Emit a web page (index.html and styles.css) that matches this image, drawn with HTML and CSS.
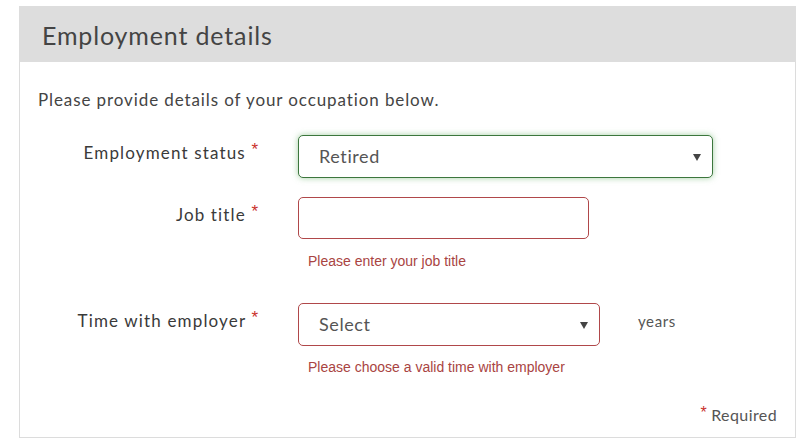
FILE: index.html
```html
<!DOCTYPE html>
<html>
<head>
<meta charset="utf-8">
<link rel="stylesheet" href="styles.css">
</head>
<body>
<div class="panel">
  <div class="panel-head">Employment details</div>
  <div class="panel-body">
    <p class="intro">Please provide details of your occupation below.</p>

    <div class="row row-status">
      <label class="label">Employment status <span class="req">*</span></label>
      <div class="field">
        <div class="select select-ok select-wide">
          <span class="value">Retired</span>
          <span class="arrow"></span>
        </div>
      </div>
    </div>

    <div class="row row-job">
      <label class="label">Job title <span class="req">*</span></label>
      <div class="field">
        <div class="input input-err"></div>
        <div class="error">Please enter your job title</div>
      </div>
    </div>

    <div class="row row-time">
      <label class="label">Time with employer <span class="req">*</span></label>
      <div class="field">
        <div class="field-line">
          <div class="select select-err select-mid">
            <span class="value">Select</span>
            <span class="arrow"></span>
          </div>
          <span class="unit">years</span>
        </div>
        <div class="error error-2">Please choose a valid time with employer</div>
      </div>
    </div>

    <div class="required"><span class="req">*</span> Required</div>
  </div>
</div>
</body>
</html>
```

FILE: styles.css
```css
html, body {
  margin: 0;
  padding: 0;
  background: #ffffff;
}
body {
  padding: 6px 13px 0 19px;
  font-family: "Lato", "Open Sans", sans-serif;
  color: #444;
}
.panel {
  border: 1px solid #dcdcdc;
  border-top: none;
  width: 777px;
  height: 432px;
  box-sizing: border-box;
}
.panel-head {
  background: #dddddd;
  height: 56px;
  margin: 0 -1px;
  padding-left: 23px;
  font-size: 25px;
  line-height: 58px;
  color: #444;
  letter-spacing: 0.85px;
}
.panel-body {
  padding: 26px 18px 0 18px;
}
.intro {
  margin: 0;
  font-size: 17px;
  line-height: 24px;
  color: #444;
  letter-spacing: 0.9px;
}
.row {
  display: flex;
  align-items: flex-start;
}
.row-status { margin-top: 23px; }
.row-job { margin-top: 19px; }
.row-time { margin-top: 33px; }
.label {
  width: 220px;
  flex: none;
  text-align: right;
  font-size: 17px;
  line-height: 24px;
  padding-top: 6px;
  color: #3a3a3a;
  margin-right: 40px;
  letter-spacing: 1.15px;
}
.req {
  color: #c9302c;
  font-family: "Liberation Sans", Arial, sans-serif;
  font-size: 17px;
  position: relative;
  top: -4px;
  letter-spacing: 0;
}
.field { flex: none; }
.field-line {
  display: flex;
  align-items: flex-start;
}
.select, .input {
  position: relative;
  box-sizing: border-box;
  border-radius: 5px;
  background: #fff;
}
.select {
  height: 43px;
  padding-left: 20px;
  font-size: 18px;
  line-height: 41px;
  color: #555;
  letter-spacing: 0.6px;
}
.select-wide { width: 415px; }
.select-mid { width: 302px; }
.select-ok {
  border: 1px solid #3c763d;
  box-shadow: 0 0 6px rgba(103, 177, 104, 0.6);
}
.select-err { border: 1px solid #b0484a; }
.input {
  width: 291px;
  height: 42px;
}
.input-err { border: 1px solid #b0484a; }
.arrow {
  position: absolute;
  right: 11px;
  top: 18px;
  width: 0;
  height: 0;
  border-left: 4px solid transparent;
  border-right: 4px solid transparent;
  border-top: 7px solid #444;
}
.error {
  margin-top: 13px;
  padding-left: 10px;
  font-family: "Liberation Sans", Arial, sans-serif;
  font-size: 14px;
  line-height: 18px;
  color: #a94442;
}
.error-2 { margin-top: 12px; }
.unit {
  margin-left: 38px;
  font-size: 15px;
  line-height: 36px;
  color: #555;
  letter-spacing: 0.6px;
}
.required {
  margin-top: 29px;
  text-align: right;
  font-size: 16px;
  line-height: 20px;
  color: #555;
  letter-spacing: 0.4px;
}
.required .req {
  font-size: 16px;
  top: -3px;
}
```
